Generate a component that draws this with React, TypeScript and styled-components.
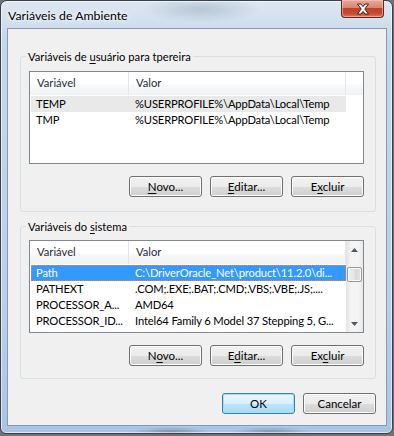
import React from "react";
import styled, { createGlobalStyle } from "styled-components";

const GlobalStyle = createGlobalStyle`
  html, body {
    margin: 0;
    padding: 0;
    background: #6d7378;
  }
  body {
    font-family: Lato, "Noto Sans", sans-serif;
    font-size: 11.2px;
    color: #000;
  }
`;

interface Row {
  name: string;
  value: string;
}

const userVars: Row[] = [
  { name: "TEMP", value: "%USERPROFILE%\\AppData\\Local\\Temp" },
  { name: "TMP", value: "%USERPROFILE%\\AppData\\Local\\Temp" },
];

const systemVars: Row[] = [
  { name: "Path", value: "C:\\DriverOracle_Net\\product\\11.2.0\\di..." },
  { name: "PATHEXT", value: ".COM;.EXE;.BAT;.CMD;.VBS;.VBE;.JS;...." },
  { name: "PROCESSOR_A...", value: "AMD64" },
  { name: "PROCESSOR_ID...", value: "Intel64 Family 6 Model 37 Stepping 5, G..." },
];

// label with one underlined access key, like a Win32 "&" mnemonic
function Mnemonic({ text, at }: { text: string; at: number }) {
  return (
    <>
      {text.slice(0, at)}
      <Key>{text[at]}</Key>
      {text.slice(at + 1)}
    </>
  );
}

function CloseGlyph() {
  return (
    <svg width="16" height="12" viewBox="0 0 16 12">
      <path
        d="M2.5 1 H6 L8 3.6 L10 1 H13.5 L9.8 6 L13.5 11 H10 L8 8.4 L6 11 H2.5 L6.2 6 Z"
        fill="#fff"
        stroke="#4a1c12"
        strokeWidth="1"
        strokeLinejoin="round"
      />
    </svg>
  );
}

function ScrollArrow({ down }: { down?: boolean }) {
  return (
    <svg width="7" height="4" viewBox="0 0 7 4">
      <path d={down ? "M0 0 H7 L3.5 4 Z" : "M0 4 H7 L3.5 0 Z"} fill="#4d5a68" />
    </svg>
  );
}

function VarList({
  rows,
  selected,
  focused,
  scroll,
}: {
  rows: Row[];
  selected: number;
  focused?: boolean;
  scroll?: boolean;
}) {
  return (
    <ListView $top={scroll ? 6 : 7}>
      <ListBody>
        <Header>
          <HeaderCell $w={99}>Variável</HeaderCell>
          <HeaderCell $w={217}>Valor</HeaderCell>
          <HeaderRest />
        </Header>
        <Rows>
          {rows.map((r, i) => (
            <ItemRow
              key={r.name}
              $state={i === selected ? (focused ? "focus" : "dim") : "none"}
            >
              <NameCell>{r.name}</NameCell>
              <ValueCell>{r.value}</ValueCell>
            </ItemRow>
          ))}
        </Rows>
      </ListBody>
      {scroll && (
        <ScrollBar>
          <ArrowBox>
            <ScrollArrow />
          </ArrowBox>
          <Track>
            <Thumb />
          </Track>
          <ArrowBox>
            <ScrollArrow down />
          </ArrowBox>
        </ScrollBar>
      )}
    </ListView>
  );
}

export default function App() {
  return (
    <>
      <GlobalStyle />
      <Window>
        <TitleBar>
          <Title>Variáveis de Ambiente</Title>
          <CloseButton>
            <CloseGlyph />
          </CloseButton>
        </TitleBar>
        <Client>
          <Group $pad={14}>
            <Legend>
              <Mnemonic text="Variáveis de usuário para tpereira" at={13} />
            </Legend>
            <VarList rows={userVars} selected={0} />
            <ButtonRow>
              <Button>
                <Mnemonic text="Novo..." at={0} />
              </Button>
              <Button>
                <Mnemonic text="Editar..." at={0} />
              </Button>
              <Button>
                <Mnemonic text="Excluir" at={1} />
              </Button>
            </ButtonRow>
          </Group>
          <Group $pad={12} $second>
            <Legend>
              <Mnemonic text="Variáveis do sistema" at={13} />
            </Legend>
            <VarList rows={systemVars} selected={0} focused scroll />
            <ButtonRow>
              <Button>
                <Mnemonic text="Novo..." at={1} />
              </Button>
              <Button>
                <Mnemonic text="Editar..." at={1} />
              </Button>
              <Button>
                <Mnemonic text="Excluir" at={2} />
              </Button>
            </ButtonRow>
          </Group>
          <DialogButtons>
            <Button $default>OK</Button>
            <Button>Cancelar</Button>
          </DialogButtons>
        </Client>
      </Window>
    </>
  );
}

const Window = styled.div`
  width: 393px;
  height: 434px;
  box-sizing: border-box;
  padding: 0 5px 7px 6px;
  display: flex;
  flex-direction: column;
  border: 1px solid #39424c;
  border-radius: 7px 7px 6px 6px;
  background:
    radial-gradient(ellipse 40px 6px at 170px 100%, rgba(70, 90, 115, 0.55), transparent),
    radial-gradient(ellipse 40px 6px at 270px 100%, rgba(70, 90, 115, 0.5), transparent),
    radial-gradient(ellipse 60px 14px at 200px 8px, rgba(120, 140, 160, 0.35), transparent),
    linear-gradient(#dfe8f2, #c4d7ec 40px, #b9d0ea 70%, #a9c4e4);
  box-shadow: inset 0 0 0 1px rgba(255, 255, 255, 0.6);
`;

const TitleBar = styled.div`
  height: 28px;
  display: flex;
  align-items: flex-start;
  justify-content: space-between;
`;

const Title = styled.div`
  margin: 7px 0 0 1px;
  color: #000;
  font-size: 12.3px;
  line-height: 15px;
  text-shadow: 0 0 6px #fff, 0 0 4px #fff;
`;

const CloseButton = styled.div`
  width: 43px;
  height: 18px;
  margin-top: -1px;
  margin-right: 3px;
  box-sizing: border-box;
  display: flex;
  align-items: center;
  justify-content: center;
  border: 1px solid #5a2a20;
  border-top: none;
  border-radius: 0 0 4px 4px;
  background: linear-gradient(#e9a999, #d98570 45%, #c0412a 50%, #c84a32 80%, #e07a5c);
  box-shadow: inset 0 0 0 1px rgba(255, 210, 200, 0.5);
`;

const Client = styled.div`
  flex: 1;
  display: flex;
  flex-direction: column;
  border: 1px solid #8a9aae;
  background: #f0f0f0;
  padding: 20px 10px 11px 12px;
`;

const Group = styled.fieldset<{ $second?: boolean; $pad: number }>`
  margin: ${({ $second }) => ($second ? "7px" : "0")} 0 0 0;
  padding: 0 11px ${({ $pad }) => $pad}px 8px;
  border: 1px solid #d5dfe5;
  border-radius: 3px;
  min-width: 0;
`;

const Legend = styled.legend`
  padding: 0 2px;
  margin-left: -3px;
  line-height: 15px;
  color: #000;
`;

const Key = styled.span`
  text-decoration: underline;
  text-underline-offset: 2px;
`;

const ListView = styled.div<{ $top: number }>`
  margin-top: ${({ $top }) => $top}px;
  height: 93px;
  box-sizing: border-box;
  border: 1px solid #828790;
  background: #fff;
  display: flex;
  overflow: hidden;
`;

const ListBody = styled.div`
  flex: 1;
  min-width: 0;
  display: flex;
  flex-direction: column;
`;

const Header = styled.div`
  height: 23px;
  flex-shrink: 0;
  display: flex;
  background: linear-gradient(#fff 50%, #f7f8f9 60%, #f1f2f4);
`;

const HeaderCell = styled.div<{ $w: number }>`
  width: ${({ $w }) => $w}px;
  flex-shrink: 0;
  box-sizing: border-box;
  padding-left: 7px;
  line-height: 22px;
  color: #1e2a3a;
  border-right: 1px solid #e3e6ea;
`;

const HeaderRest = styled.div`
  flex: 1;
`;

const Rows = styled.div`
  padding: 1px 0 0 1px;
  display: flex;
  flex-direction: column;
`;

const ItemRow = styled.div<{ $state: "none" | "dim" | "focus" }>`
  width: 315px;
  height: 16px;
  display: flex;
  box-sizing: border-box;
  line-height: 16px;
  letter-spacing: -0.15px;
  white-space: nowrap;
  color: ${({ $state }) => ($state === "focus" ? "#fff" : "#000")};
  background: ${({ $state }) =>
    $state === "focus" ? "#3399ff" : $state === "dim" ? "#e9e9e9" : "transparent"};
  outline: ${({ $state }) => ($state === "focus" ? "1px dotted #e08a3a" : "none")};
  outline-offset: -1px;
`;

const NameCell = styled.div`
  width: 98px;
  flex-shrink: 0;
  padding-left: 5px;
  box-sizing: border-box;
  overflow: hidden;
`;

const ValueCell = styled.div`
  flex: 1;
  padding-left: 6px;
  overflow: hidden;
`;

const ScrollBar = styled.div`
  width: 17px;
  flex-shrink: 0;
  display: flex;
  flex-direction: column;
  background: linear-gradient(90deg, #e3e3e3, #f4f4f4 30%, #f4f4f4 70%, #e9e9e9);
`;

const ArrowBox = styled.div`
  height: 17px;
  display: flex;
  align-items: center;
  justify-content: center;
`;

const Track = styled.div`
  flex: 1;
  display: flex;
  flex-direction: column;
  align-items: center;
  padding-top: 9px;
`;

const Thumb = styled.div`
  width: 15px;
  height: 15px;
  box-sizing: border-box;
  border: 1px solid #979797;
  border-radius: 2px;
  background: linear-gradient(90deg, #f1f1f1, #e3e3e3 50%, #d6d6d6 51%, #e3e3e3);
  box-shadow: inset 0 0 0 1px #fafafa;
`;

const ButtonRow = styled.div`
  margin-top: 12px;
  display: flex;
  justify-content: flex-end;
  gap: 8px;
`;

const DialogButtons = styled.div`
  margin-top: 14px;
  display: flex;
  justify-content: flex-end;
  gap: 8px;
`;

const Button = styled.button<{ $default?: boolean }>`
  width: 73px;
  height: 21px;
  padding: 0;
  box-sizing: border-box;
  font-family: inherit;
  font-size: 11.5px;
  line-height: 18px;
  color: #000;
  border-radius: 3px;
  border: 1px solid ${({ $default }) => ($default ? "#3c7fb1" : "#707070")};
  background: ${({ $default }) =>
    $default
      ? "linear-gradient(#eaf6fd, #d9f0fc 50%, #bee6fd 51%, #a7d9f5)"
      : "linear-gradient(#f2f2f2, #ebebeb 50%, #dddddd 51%, #cfcfcf)"};
  box-shadow: inset 0 0 0 1px ${({ $default }) => ($default ? "#a7dcf7" : "#fcfcfc")};
`;
